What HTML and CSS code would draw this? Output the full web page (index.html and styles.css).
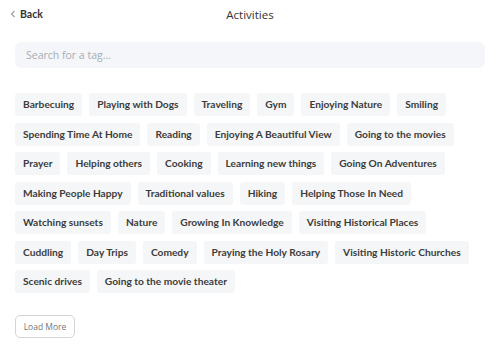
FILE: index.html
```html
<!DOCTYPE html>
<html lang="en">
<head>
    <meta charset="UTF-8">
    <meta name="viewport" content="width=device-width, initial-scale=1.0">
    <title>Activities</title>
    <link rel="stylesheet" href="styles.css">
</head>
<body>
    <div class="page">
        <div class="topbar">
            <a class="back" href="#">
                <svg width="6" height="8" viewBox="0 0 6 8"><path d="M4.5 1 L1.5 4 L4.5 7" fill="none" stroke="#9aa0a6" stroke-width="1.2"/></svg>
                Back
            </a>
            <h1>Activities</h1>
        </div>
        <input class="search" type="text" placeholder="Search for a tag...">
        <div class="tags">
            <span class="tag">Barbecuing</span>
            <span class="tag">Playing with Dogs</span>
            <span class="tag">Traveling</span>
            <span class="tag">Gym</span>
            <span class="tag">Enjoying Nature</span>
            <span class="tag">Smiling</span>
            <span class="tag">Spending Time At Home</span>
            <span class="tag">Reading</span>
            <span class="tag">Enjoying A Beautiful View</span>
            <span class="tag">Going to the movies</span>
            <span class="tag">Prayer</span>
            <span class="tag">Helping others</span>
            <span class="tag">Cooking</span>
            <span class="tag">Learning new things</span>
            <span class="tag">Going On Adventures</span>
            <span class="tag">Making People Happy</span>
            <span class="tag">Traditional values</span>
            <span class="tag">Hiking</span>
            <span class="tag">Helping Those In Need</span>
            <span class="tag">Watching sunsets</span>
            <span class="tag">Nature</span>
            <span class="tag">Growing In Knowledge</span>
            <span class="tag">Visiting Historical Places</span>
            <span class="tag">Cuddling</span>
            <span class="tag">Day Trips</span>
            <span class="tag">Comedy</span>
            <span class="tag">Praying the Holy Rosary</span>
            <span class="tag">Visiting Historic Churches</span>
            <span class="tag">Scenic drives</span>
            <span class="tag">Going to the movie theater</span>
        </div>
        <button class="load-more">Load More</button>
    </div>
</body>
</html>
```
FILE: styles.css
```css
body {
    margin: 0;
    font-family: 'Lato', sans-serif;
    background: #ffffff;
    color: #333;
}

.page {
    padding: 0 15px;
}

.topbar {
    position: relative;
    height: 28px;
    display: flex;
    align-items: center;
}

.back {
    display: flex;
    align-items: center;
    gap: 4px;
    margin-left: -5px;
    font-size: 10.5px;
    font-weight: 700;
    color: #333;
    text-decoration: none;
}

.topbar h1 {
    position: absolute;
    left: 0;
    right: 0;
    margin: 0;
    text-align: center;
    font-family: 'Open Sans', sans-serif;
    font-size: 11.5px;
    font-weight: 500;
    color: #333;
    pointer-events: none;
}

.search {
    display: block;
    width: 100%;
    box-sizing: border-box;
    margin-top: 14px;
    height: 26px;
    padding: 0 11px;
    border: none;
    border-radius: 6px;
    background: #f4f6f9;
    font-family: 'Open Sans', sans-serif;
    font-size: 10.5px;
    outline: none;
}

.search::placeholder {
    color: #a6adb4;
}

.tags {
    display: flex;
    flex-wrap: wrap;
    gap: 6.5px 7px;
    margin-top: 25px;
}

.tag {
    height: 23px;
    line-height: 23px;
    padding: 0 8px;
    background: #f5f6f7;
    border-radius: 3px;
    font-size: 10.2px;
    font-weight: 700;
    color: #3c3c3c;
}

.load-more {
    margin-top: 22px;
    width: 60px;
    height: 23px;
    padding: 0;
    background: #fff;
    border: 1px solid #d4d4d4;
    border-radius: 5px;
    font-family: 'Open Sans', sans-serif;
    font-size: 8.5px;
    color: #777;
}
```
